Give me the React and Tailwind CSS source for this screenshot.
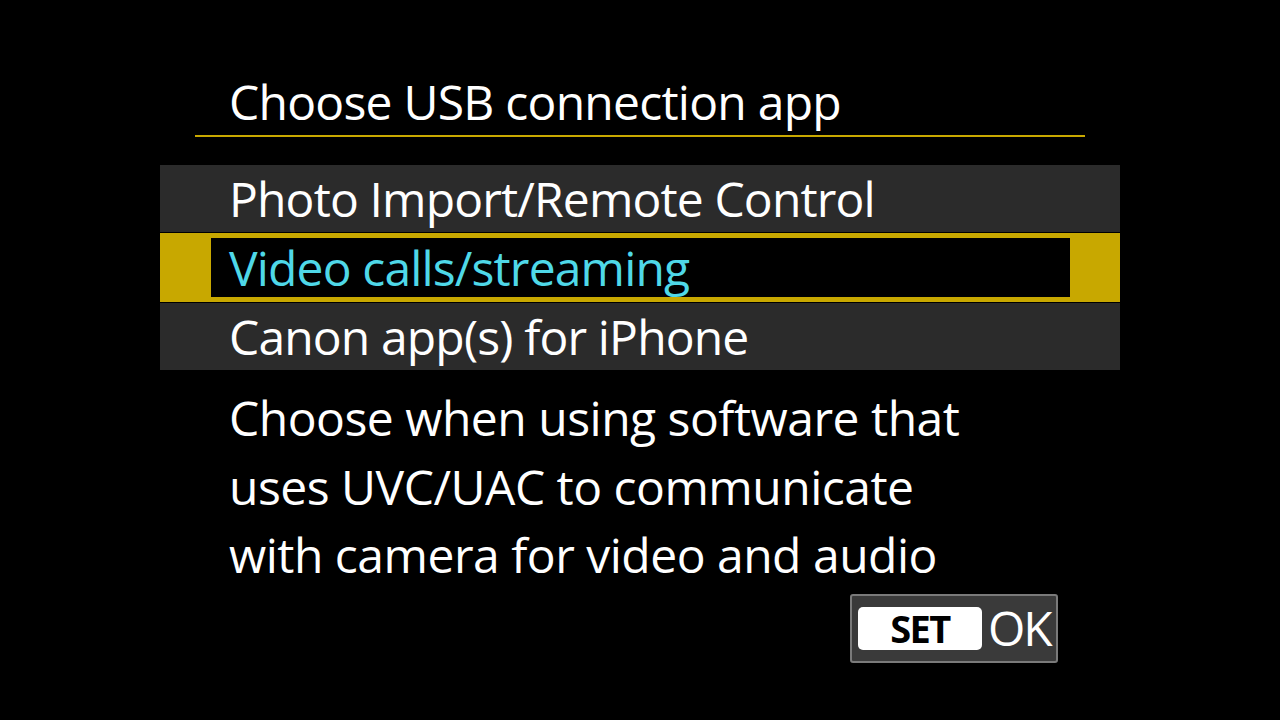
export default function App() {
  const font = { fontFamily: '"Open Sans", "Noto Sans", sans-serif' };
  return (
    <div className="w-[1280px] h-[720px] bg-black text-white overflow-hidden" style={font}>
      <div className="pt-[74px] pl-[229px] text-[48px] leading-[56px] tracking-[-0.75px]">
        Choose USB connection app
      </div>
      <div className="ml-[195px] w-[890px] h-[2px] mt-[5px] bg-[#c8a800]" />
      <div className="mt-[28px] ml-[160px] w-[960px] flex flex-col gap-px bg-black text-[48px] tracking-[-0.85px]">
        <div className="h-[67px] bg-[#2b2b2b] pl-[69px] leading-[67px]">Photo Import/Remote Control</div>
        <div className="h-[69px] bg-[#c8a800] pl-[51px] pr-[50px] py-[5px]">
          <div className="h-[59px] bg-black pl-[18px] leading-[59px] text-[#4fd8e8]">Video calls/streaming</div>
        </div>
        <div className="h-[67px] bg-[#2b2b2b] pl-[69px] leading-[67px]">Canon app(s) for iPhone</div>
      </div>
      <div className="mt-[14px] pl-[229px] text-[48px] leading-[68.5px] tracking-[-0.5px]">
        <div>Choose when using software that</div>
        <div>uses UVC/UAC to communicate</div>
        <div>with camera for video and audio</div>
      </div>
      <div className="mt-[4px] flex justify-end pr-[222px]">
        <div className="w-[208px] h-[69px] border-2 border-[#7a7a7a] bg-[#3a3a3a] rounded-[3px] flex items-center pl-[6px] gap-[6px]">
          <div className="w-[124px] h-[43px] bg-white rounded-[5px] flex items-center justify-center text-black font-bold text-[38px] leading-none tracking-[-1.5px]">SET</div>
          <div className="text-[48px] leading-none tracking-[-2px]">OK</div>
        </div>
      </div>
    </div>
  );
}
